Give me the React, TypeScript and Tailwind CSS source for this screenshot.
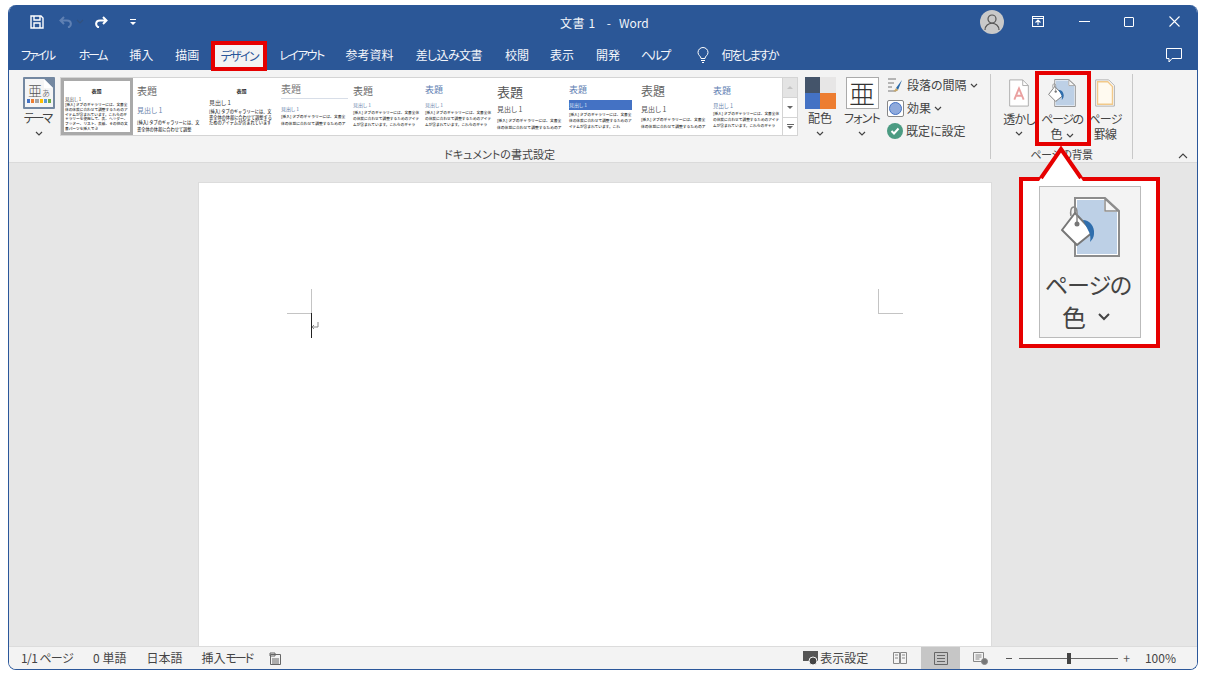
import React from 'react';

const tabs = [
  { label: 'ファイル', cls: 'tracking-[-2.2px]' },
  { label: 'ホーム', cls: 'tracking-[-2.3px] ml-[4px] mr-[2px]' },
  { label: '挿入', cls: '' },
  { label: '描画', cls: 'ml-[1px]' },
  { label: 'デザイン', cls: 'tracking-[-1.7px]' },
  { label: 'レイアウト', cls: 'tracking-[-1.6px]' },
  { label: '参考資料', cls: 'ml-[1px]' },
  { label: '差し込み文書', cls: 'tracking-[-0.6px] ml-[1px]' },
  { label: '校閲', cls: 'ml-[2px]' },
  { label: '表示', cls: '' },
  { label: '開発', cls: 'ml-[1px]' },
  { label: 'ヘルプ', cls: 'tracking-[-2px]' },
];

const bodyText = '[挿入] タブのギャラリーには、文書全体の体裁に合わせて調整するためのアイテムが含まれています。これらのギャラリーを使用して、表、ヘッダー、フッター、リスト、表紙、その他の文書パーツを挿入できます。';

interface StyleItem {
  title: string;
  titleClass: string;
  headingClass: string;
  bodyClass: string;
  box: string;
  chars: number;
}

const styleItems: StyleItem[] = [
  { box: 'pl-[1px] pr-[2px] pt-[6px] border-[3px] border-[#a9a9a9]', chars: 96, title: '表題', titleClass: 'text-[5px] leading-[8px] font-bold text-center text-[#333]', headingClass: 'text-[4.5px] leading-[6px] mt-[1px] text-[#444]', bodyClass: 'text-[3.7px] leading-[4.8px] mt-[1px]' },
  { box: 'pl-[4px] pr-[3px] pt-[6px]', chars: 30, title: '表題', titleClass: 'text-[10px] leading-[14px] text-[#666]', headingClass: 'text-[7px] leading-[10px] mt-[7px] text-[#6c86ad]', bodyClass: 'text-[4.2px] leading-[6.5px] mt-[4px]' },
  { box: 'pl-[4px] pr-[3px] pt-[9px]', chars: 47, title: '表題', titleClass: 'text-[5px] leading-[8px] font-bold text-center text-[#333]', headingClass: 'text-[6px] leading-[8px] mt-[4px] text-[#444]', bodyClass: 'text-[4.2px] leading-[5.6px] mt-[2px]' },
  { box: 'pl-[4px] pr-[1px] pt-[4px]', chars: 36, title: '表題', titleClass: 'text-[10px] leading-[14px] text-[#777] border-b border-[#d8dee8] pb-[2px]', headingClass: 'text-[5px] leading-[6px] mt-[7px] text-[#5a7aa6]', bodyClass: 'text-[3.8px] leading-[7px] mt-[1px]' },
  { box: 'pl-[4px] pr-[1px] pt-[6px]', chars: 55, title: '表題', titleClass: 'text-[10px] leading-[14px] text-[#666]', headingClass: 'text-[5px] leading-[6px] mt-[4px] text-[#6c86ad]', bodyClass: 'text-[3.7px] leading-[6px] mt-[2px]' },
  { box: 'pl-[4px] pr-[1px] pt-[5px]', chars: 55, title: '表題', titleClass: 'text-[9px] leading-[14px] text-[#5f7fb3]', headingClass: 'text-[5px] leading-[6px] mt-[5px] text-[#6c86ad]', bodyClass: 'text-[3.7px] leading-[6px] mt-[2px]' },
  { box: 'pl-[4px] pr-[1px] pt-[5px]', chars: 36, title: '表題', titleClass: 'text-[13px] leading-[18px] text-[#555]', headingClass: 'text-[7px] leading-[10px] mt-[3px] text-[#555]', bodyClass: 'text-[3.8px] leading-[7px] mt-[3px]' },
  { box: 'pl-[4px] pr-[5px] pt-[5px]', chars: 50, title: '表題', titleClass: 'text-[9px] leading-[14px] text-[#5f7fb3]', headingClass: 'text-[5px] leading-[10px] mt-[3px] bg-[#4472c4] text-[#dfe8f6]', bodyClass: 'text-[3.7px] leading-[6px] mt-[2px]' },
  { box: 'pl-[4px] pr-[1px] pt-[5px]', chars: 36, title: '表題', titleClass: 'text-[12px] leading-[16px] text-[#666]', headingClass: 'text-[7px] leading-[10px] mt-[5px] text-[#555]', bodyClass: 'text-[3.8px] leading-[7px] mt-[2px]' },
  { box: 'pl-[4px] pr-[1px] pt-[6px]', chars: 55, title: '表題', titleClass: 'text-[9px] leading-[14px] text-[#5f7fb3]', headingClass: 'text-[5.5px] leading-[8px] mt-[4px] text-[#6c86ad]', bodyClass: 'text-[3.7px] leading-[6px] mt-[1px]' },
];

function Chevron({ className = '' }: { className?: string }) {
  return (
    <svg className={`w-[8px] h-[5px] ${className}`} viewBox="0 0 8 5" fill="none" stroke="#444" strokeWidth="1.2">
      <path d="M1 1l3 3 3-3" />
    </svg>
  );
}

function BucketIcon({ className = '' }: { className?: string }) {
  return (
    <svg className={className} viewBox="0 0 59 60" fill="none">
      <path d="M14 1h30l14 13v45H14z" fill="#fff" stroke="#8c8c8c" strokeWidth="2" />
      <path d="M16 3h27v12h13v42H16z" fill="#bdd0e6" />
      <path d="M44 2v12h13z" fill="#f6f6f6" stroke="#8c8c8c" strokeWidth="1.5" />
      <path d="M1 33l13-17 18 19-16 13z" fill="#fff" stroke="#777" strokeWidth="2" strokeLinejoin="round" />
      <path d="M10 19c-1-5 0-9 3-9s3 3 3 6v10" stroke="#888" strokeWidth="1.5" />
      <circle cx="16" cy="27" r="2.5" fill="#777" />
      <path d="M22 23c6 0 12 6 11 14 0 3-2 6-4 8 1-4 0-8-1-10z" fill="#2f6ead" />
    </svg>
  );
}

function GalleryItem({ item }: { item: StyleItem }) {
  return (
    <div className={`w-[72px] shrink-0 overflow-hidden bg-white ${item.box}`}>
      <div className={item.titleClass}>{item.title}</div>
      <div className={item.headingClass}>見出し 1</div>
      <div className={`font-medium text-[#333] [font-feature-settings:normal] ${item.bodyClass}`}>{bodyText.slice(0, item.chars)}</div>
    </div>
  );
}

function LargeButton({ icon, lines, chevron, width }: { icon: React.ReactNode; lines: React.ReactNode; chevron?: boolean; width: string }) {
  return (
    <div className={`flex flex-col items-center shrink-0 ${width}`}>
      <div className="h-[32px] flex items-center justify-center">{icon}</div>
      <div className="mt-[2px] text-[12px] leading-[15px] text-[#444] text-center whitespace-nowrap tracking-[-0.8px]">{lines}</div>
      {chevron && <Chevron className="mt-[5px]" />}
    </div>
  );
}

export default function App() {
  return (
    <div className="relative w-[1205px] h-[674px] overflow-hidden bg-white pl-[8px] pt-[5px] font-['Noto_Sans_CJK_JP','Noto_Sans',sans-serif] [font-feature-settings:'palt']">
      <div className="w-[1190px] h-[665px] flex flex-col overflow-hidden rounded-[8px] border border-[#2b579a] border-t-0">
        {/* title bar */}
        <div className="h-[33px] shrink-0 bg-[#2b5797] flex items-center text-white relative">
          <svg className="ml-[21px] w-[14px] h-[14px]" viewBox="0 0 14 14" fill="none" stroke="#fff" strokeWidth="1.4">
            <path d="M1 1h10l2 2v10H1z" />
            <path d="M4 1v4h6V1M4 13V8h6v5" />
          </svg>
          <svg className="ml-[15px] w-[14px] h-[12px]" viewBox="0 0 14 12" fill="none" stroke="#5f80b3" strokeWidth="2">
            <path d="M5 1L1.5 4.5 5 8M2 4.5h6c5 0 5 6 1 7" />
          </svg>
          <Chevron className="ml-[3px] opacity-30" />
          <svg className="ml-[10px] w-[14px] h-[12px]" viewBox="0 0 14 12" fill="none" stroke="#fff" strokeWidth="2">
            <path d="M9 1l3.5 3.5L9 8M12 4.5H6c-5 0-5 6-1 7" />
          </svg>
          <svg className="ml-[22px] w-[6px] h-[6px]" viewBox="0 0 6 6" fill="#fff">
            <path d="M0 0h6v1H0zM0 3h6L3 6z" />
          </svg>
          <div className="absolute left-[551px] top-[9px] text-[12px] leading-[18px] whitespace-pre text-[#f2f5fa]">
            <span className="tracking-[0.6px]">文書 1</span>
            <span className="ml-[11px]">-</span>
            <span className="ml-[8px]">Word</span>
          </div>
          <div className="ml-auto flex items-center">
            <div className="w-[24px] h-[24px] rounded-full bg-[#c9c9c9] flex items-center justify-center">
              <svg className="w-[18px] h-[18px]" viewBox="0 0 18 18" fill="none" stroke="#555" strokeWidth="1.2">
                <circle cx="9" cy="6" r="4" />
                <path d="M2 17c0-9 14-9 14 0" />
              </svg>
            </div>
            <svg className="ml-[28px] w-[12px] h-[11px]" viewBox="0 0 12 11" fill="none" stroke="#fff" strokeWidth="1.1">
              <path d="M.5 .5h11v10H.5zM.5 2.5h11" />
              <path d="M3.5 6.5L6 4l2.5 2.5M6 4v5" />
            </svg>
            <div className="ml-[35px] w-[11px] h-px bg-white" />
            <div className="ml-[34px] w-[10px] h-[10px] rounded-[1px] border border-white" />
            <svg className="ml-[35px] mr-[17px] w-[11px] h-[11px]" viewBox="0 0 11 11" stroke="#fff" strokeWidth="1.1">
              <path d="M.5 .5l10 10M10.5 .5l-10 10" />
            </svg>
          </div>
        </div>

        {/* tabs */}
        <div className="h-[32px] shrink-0 bg-[#2b5797] flex items-center pl-[12px] pt-[2px] gap-[21px] text-[12px] text-white relative">
          {tabs.map((t) =>
            t.label === 'デザイン' ? (
              <div key={t.label} className={`-mx-[9px] w-[56px] h-[30px] mt-[2px] border-[4px] border-[#e60000] bg-[#f3f3f3] text-[#2b579a] flex items-center justify-center whitespace-nowrap ${t.cls}`}>
                {t.label}
              </div>
            ) : (
              <div key={t.label} className={`whitespace-nowrap text-[#f4f6fb] ${t.cls}`}>{t.label}</div>
            )
          )}
          <div className="ml-[7px] flex items-center gap-[12px]">
            <svg className="w-[12px] h-[16px]" viewBox="0 0 12 16" fill="none" stroke="#fff" strokeWidth="1">
              <path d="M4 11.5C4 9 1 8.5 1 5.5a5 5 0 0110 0c0 3-3 3.5-3 6zM4 13.5h4M5 15.5h2" />
            </svg>
            <span className="text-[#f4f6fb] tracking-[-1.7px]">何をしますか</span>
          </div>
          <svg className="ml-auto mr-[15px] w-[16px] h-[15px]" viewBox="0 0 16 15" fill="none" stroke="#fff" strokeWidth="1">
            <path d="M.5 .5h15v10H6l-3 3.5v-3.5H.5z" />
          </svg>
        </div>

        {/* ribbon */}
        <div className="h-[93px] shrink-0 bg-[#f3f3f3] border-b border-[#dadada] flex">
          <div className="w-[981px] shrink-0 flex flex-col">
            <div className="h-[77px] flex pt-[7px] pl-[12px]">
              <div className="w-[36px] shrink-0 flex flex-col items-center">
                <div className="relative w-[32px] h-[32px] rounded-[1px] border-[2px] border-[#7488a1] bg-[#f5f5f5] overflow-hidden">
                  <div className="flex items-end justify-center text-[#555] h-[20px] font-light">
                    <span className="text-[14px] leading-[17px]">亜</span>
                    <span className="text-[8px] leading-[12px]">あ</span>
                  </div>
                  <div className="flex h-[4px] gap-px px-[2px]">
                    <div className="flex-1 bg-[#4472c4]" />
                    <div className="flex-1 bg-[#ed7d31]" />
                    <div className="flex-1 bg-[#a5a5a5]" />
                    <div className="flex-1 bg-[#ffc000]" />
                    <div className="flex-1 bg-[#5b9bd5]" />
                    <div className="flex-1 bg-[#70ad47]" />
                  </div>
                  <svg className="absolute right-0 top-0 w-[9px] h-[9px]" viewBox="0 0 9 9">
                    <path d="M0 0h9v9z" fill="#7488a1" />
                    <path d="M0 0v9h9z" fill="#fff" />
                  </svg>
                </div>
                <div className="pr-[3px] text-[12px] leading-[18px] text-[#444] tracking-[-2px]">テーマ</div>
                <Chevron className="mt-[4px]" />
              </div>
              <div className="ml-[3px] w-[738px] h-[59px] shrink-0 flex border border-[#d4d4d4] bg-white">
                <div className="flex flex-1">
                  {styleItems.map((item, i) => (
                    <GalleryItem key={i} item={item} />
                  ))}
                </div>
                <div className="w-[15px] shrink-0 flex flex-col border-l border-[#d4d4d4] bg-[#f5f5f5]">
                  <div className="h-[20px] bg-[#e4e4e4] border-b border-[#d4d4d4] flex items-center justify-center">
                    <div className="w-0 h-0 border-x-[3px] border-x-transparent border-b-[3px] border-b-[#c4c4c4]" />
                  </div>
                  <div className="h-[20px] border-b border-[#d4d4d4] bg-white flex items-center justify-center">
                    <div className="w-0 h-0 border-x-[3px] border-x-transparent border-t-[3px] border-t-[#666]" />
                  </div>
                  <div className="flex-1 bg-white flex flex-col items-center justify-center gap-[1px]">
                    <div className="w-[7px] h-px bg-[#666]" />
                    <div className="w-0 h-0 border-x-[3px] border-x-transparent border-t-[3px] border-t-[#666]" />
                  </div>
                </div>
              </div>
              <div className="ml-[6px] w-[32px] shrink-0 flex flex-col items-center">
                <div className="w-[31px] h-[32px] grid grid-cols-2 grid-rows-2">
                  <div className="bg-[#44546a]" />
                  <div className="bg-[#e7e6e6]" />
                  <div className="bg-[#4472c4]" />
                  <div className="bg-[#ed7d31]" />
                </div>
                <div className="text-[12px] leading-[18px] text-[#444]">配色</div>
                <Chevron className="mt-[4px]" />
              </div>
              <div className="ml-[9px] w-[34px] shrink-0 flex flex-col items-center">
                <div className="w-[33px] h-[32px] border border-[#aaa] bg-white flex items-center justify-center text-[26px] leading-[30px] text-[#333] font-light">亜</div>
                <div className="text-[12px] leading-[18px] text-[#444] whitespace-nowrap tracking-[-0.8px]">フォント</div>
                <Chevron className="mt-[4px]" />
              </div>
              <div className="ml-[8px] -mt-[1px] flex flex-col text-[12px] text-[#444] gap-[5px] whitespace-nowrap">
                <div className="h-[18px] flex items-center gap-[3px]">
                  <svg className="w-[17px] h-[17px]" viewBox="0 0 17 17" fill="none">
                    <path d="M1 2h8M1 6h6M1 10h4M1 14h8" stroke="#777" />
                    <path d="M15 3l-6 8 2 2z" fill="#2b6aa8" />
                    <path d="M9 11c-1 2-2 3-3 3 2 1 5 0 5-1z" fill="#c8a86a" />
                  </svg>
                  段落の間隔<Chevron />
                </div>
                <div className="h-[18px] flex items-center gap-[3px]">
                  <div className="w-[17px] h-[17px] rounded-[2px] border border-[#888] bg-white flex items-center justify-center">
                    <div className="w-[13px] h-[13px] rounded-full bg-[#8faadc] border border-[#4472c4]" />
                  </div>
                  効果<Chevron />
                </div>
                <div className="h-[18px] flex items-center gap-[3px]">
                  <div className="w-[16px] h-[16px] rounded-full bg-[#4b9b82] flex items-center justify-center">
                    <svg className="w-[10px] h-[10px]" viewBox="0 0 10 10" fill="none" stroke="#fff" strokeWidth="2">
                      <path d="M1.5 5l2.5 2.5L8.5 2.5" />
                    </svg>
                  </div>
                  既定に設定
                </div>
              </div>
            </div>
            <div className="text-[11px] leading-[16px] text-[#444] text-center">ドキュメントの書式設定</div>
          </div>
          <div className="w-px h-[85px] mt-[4px] bg-[#c8c8c8] shrink-0" />
          <div className="w-[141px] shrink-0 flex flex-col">
            <div className="h-[77px] flex pt-[7px] pl-[12px]">
              <LargeButton
                width="w-[32px]"
                chevron
                lines="透かし"
                icon={
                  <svg className="w-[22px] h-[28px]" viewBox="0 0 22 30" fill="none">
                    <path d="M1 1h14l6 6v22H1z" fill="#fff" stroke="#aaa" />
                    <path d="M15 1v6h6" stroke="#aaa" />
                    <path d="M6 22l5-12 5 12M8 18h6" stroke="#eaa0a0" strokeWidth="2" />
                  </svg>
                }
              />
              <LargeButton
                width="w-[54px]"
                lines={<><span className="tracking-[-1.4px]">ページの</span><br />色 <Chevron className="inline ml-[2px]" /></>}
                icon={<BucketIcon className="w-[28px] h-[28px]" />}
              />
              <LargeButton
                width="w-[32px]"
                lines={<>ページ<br />罫線</>}
                icon={
                  <svg className="w-[22px] h-[28px]" viewBox="0 0 22 30" fill="none">
                    <path d="M1 1h14l6 6v22H1z" fill="#fff" stroke="#aaa" />
                    <path d="M3 3h11l5 5v19H3z" fill="#fffaf0" stroke="#f2c98a" strokeWidth="1.5" />
                  </svg>
                }
              />
            </div>
            <div className="text-[11px] leading-[16px] text-[#444] text-center tracking-[-0.5px]">ページの背景</div>
          </div>
          <div className="w-px h-[85px] mt-[4px] bg-[#c8c8c8] shrink-0" />
          <div className="flex-1 flex items-end justify-end pr-[9px] pb-[3px]">
            <svg className="w-[10px] h-[6px]" viewBox="0 0 10 6" fill="none" stroke="#444" strokeWidth="1.1">
              <path d="M1 5l4-4 4 4" />
            </svg>
          </div>
        </div>

        {/* document */}
        <div className="flex-1 min-h-0 bg-[#e6e6e6] pl-[189px] pt-[19px] overflow-hidden">
          <div className="relative w-[794px] h-[600px] bg-white border border-[#dcdcdc]">
            <div className="absolute left-[88px] top-[106px] w-[25px] h-[25px] border-r border-b border-[#c4c4c4]" />
            <div className="absolute left-[679px] top-[106px] w-[25px] h-[25px] border-l border-b border-[#c4c4c4]" />
            <div className="absolute left-[112px] top-[130px] w-px h-[25px] bg-[#222]" />
            <svg className="absolute left-[112px] top-[139px] w-[8px] h-[9px]" viewBox="0 0 8 9" fill="none" stroke="#888">
              <path d="M7 0v5H1M3 3L1 5l2 2" />
            </svg>
          </div>
        </div>

        {/* status bar */}
        <div className="h-[23px] shrink-0 bg-[#f3f3f3] border-t border-[#dcdcdc] flex items-center text-[12px] text-[#444] whitespace-nowrap">
          <span className="ml-[12px] tracking-[-0.6px]">1/1 ページ</span>
          <span className="ml-[20px]">0 単語</span>
          <span className="ml-[20px]">日本語</span>
          <span className="ml-[19px]">挿入<span className="tracking-[-2px]">モード</span></span>
          <svg className="ml-[17px] w-[13px] h-[13px]" viewBox="0 0 13 13" fill="none" stroke="#666">
            <path d="M1.5 2.5h10v10h-10z" />
            <path d="M1 1h5v3H1zM3 7h7M3 9h7M3 11h7" strokeWidth="1" />
          </svg>
          <div className="ml-auto flex items-center h-full">
            <svg className="w-[17px] h-[15px]" viewBox="0 0 17 15">
              <path d="M0 0h15v10H0z" fill="#555" />
              <circle cx="10" cy="10" r="4" fill="#444" stroke="#f3f3f3" />
            </svg>
            <span className="text-[#444]">表示設定</span>
            <svg className="ml-[25px] w-[14px] h-[12px]" viewBox="0 0 14 12" fill="none" stroke="#888">
              <path d="M.5 .5h6v11h-6zM7.5 .5h6v11h-6zM2 3h3M2 6h3M9 3h3M9 6h3" />
            </svg>
            <div className="ml-[14px] w-[39px] h-full bg-[#c6c6c6] flex items-center justify-center">
              <svg className="w-[14px] h-[13px]" viewBox="0 0 14 13" fill="none" stroke="#666">
                <path d="M.5 .5h13v12H.5zM3 3.5h8M3 6.5h8M3 9.5h8" />
              </svg>
            </div>
            <svg className="ml-[13px] w-[15px] h-[13px]" viewBox="0 0 15 13" fill="none" stroke="#888">
              <path d="M.5 .5h10v9H.5zM2.5 3h6M2.5 5h6M2.5 7h4" />
              <circle cx="11.5" cy="9.5" r="3" fill="#777" />
            </svg>
            <span className="ml-[18px] w-[6px] h-px bg-[#555]" />
            <div className="ml-[7px] relative w-[99px] h-px bg-[#666]">
              <div className="absolute left-[48px] -top-[5px] w-[4px] h-[11px] bg-[#444]" />
            </div>
            <span className="ml-[5px] text-[#555]">+</span>
            <span className="ml-[15px] mr-[21px]">100%</span>
          </div>
        </div>
      </div>

      {/* callout over page colour button */}
      <div className="absolute left-[1035px] top-[71px] w-[56px] h-[75px] border-[4px] border-[#e60000]" />
      <div className="absolute left-[1019px] top-[177px] w-[141px] h-[171px] border-[4px] border-[#e60000] bg-white pl-[16px] pt-[5px]">
        <div className="w-[102px] h-[152px] border border-[#bbb] bg-[#f3f3f3] flex flex-col items-center pt-[10px]">
          <BucketIcon className="w-[59px] h-[60px]" />
          <div className="mt-[10px] pr-[4px] text-[23px] leading-[34px] text-[#444] whitespace-nowrap tracking-[-1px]">ページの</div>
          <div className="-mt-px pr-[8px] text-[24px] leading-[34px] text-[#444] flex items-center gap-[12px]">
            色
            <svg className="w-[12px] h-[8px]" viewBox="0 0 12 8" fill="none" stroke="#444" strokeWidth="2">
              <path d="M1 1l5 5 5-5" />
            </svg>
          </div>
        </div>
      </div>
      <svg className="absolute left-[1030px] top-[144px] w-[60px] h-[38px]" viewBox="0 0 60 38">
        <path d="M9 37L31 4l22 33z" fill="#fff" />
        <path d="M11 34L31 5l20 29" fill="none" stroke="#e60000" strokeWidth="4" />
      </svg>
    </div>
  );
}
